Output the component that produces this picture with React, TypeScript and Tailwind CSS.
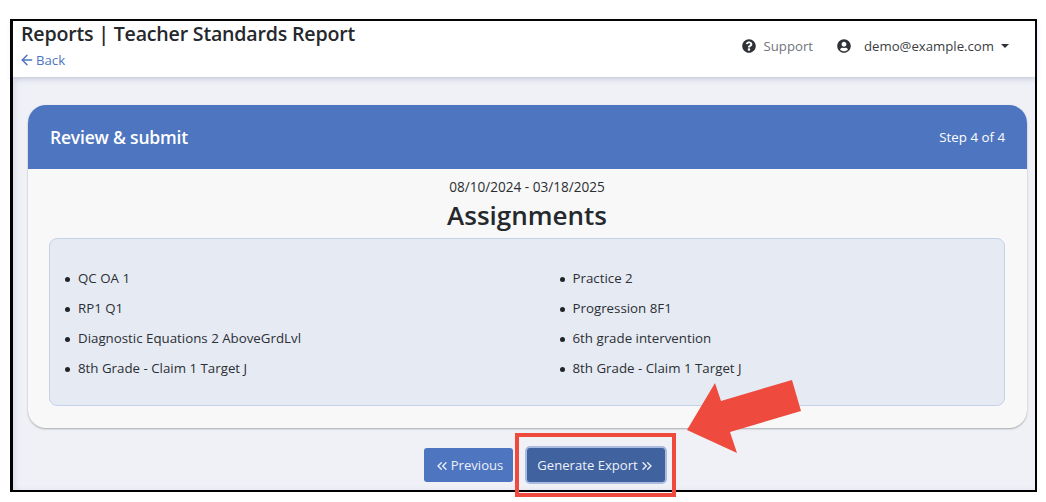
import { ArrowLeft, ChevronsLeft, ChevronsRight } from "lucide-react";
import { FaQuestionCircle, FaUserCircle } from "react-icons/fa";

const leftItems = [
  "QC OA 1",
  "RP1 Q1",
  "Diagnostic Equations 2 AboveGrdLvl",
  "8th Grade - Claim 1 Target J",
];

const rightItems = [
  "Practice 2",
  "Progression 8F1",
  "6th grade intervention",
  "8th Grade - Claim 1 Target J",
];

const AssignmentList = ({ items }: { items: string[] }) => (
  <ul className="flex flex-col gap-[10px]">
    {items.map((item, i) => (
      <li key={i} className="flex h-[20px] items-center text-[13.3px] text-[#2b2f33]">
        <span className="mr-[8px] h-[5px] w-[5px] rounded-full bg-[#212529]" />
        {item}
      </li>
    ))}
  </ul>
);

const App = () => {
  return (
    <div className="relative h-[502px] w-[1046px] overflow-hidden bg-white pl-[10px] pt-[19px] font-['Open_Sans',sans-serif]">
      <div className="flex h-[473px] w-[1027px] flex-col border-2 border-l-[3px] border-black bg-[#f0f1f7]">
        <header className="z-10 flex h-[56px] shrink-0 items-start justify-between bg-white pl-[8px] pr-[26px] shadow-[0_2px_6px_rgba(90,100,150,0.25)]">
          <div>
            <h1 className="text-[19.6px] font-semibold leading-[26px] tracking-[-0.2px] text-[#25282c]">
              Reports | Teacher Standards Report
            </h1>
            <a className="-ml-[2px] mt-[3px] flex items-center gap-[1px] text-[13.2px] leading-[20px] text-[#4e75c0]">
              <ArrowLeft size={16} strokeWidth={2.25} />
              Back
            </a>
          </div>
          <div className="flex items-center pt-[15px] text-[13.2px] leading-[20px]">
            <FaQuestionCircle className="mr-[8px] text-[14px] text-[#2f3236]" />
            <span className="mr-[24px] text-[#70757a]">Support</span>
            <FaUserCircle className="mr-[13px] text-[14px] text-[#2f3236]" />
            <span className="text-[#3a3e42]">demo@example.com</span>
            <span className="ml-[7px] h-0 w-0 border-x-[4px] border-t-[4px] border-x-transparent border-t-[#2f3236]" />
          </div>
        </header>
        <main className="flex flex-1 flex-col pl-[15px] pr-[8px] pt-[28px] shadow-[inset_3px_0_4px_rgba(90,100,150,0.12)]">
          <section className="h-[323px] overflow-hidden rounded-[18px] bg-[#f8f8f8] shadow-[0_1px_2px_rgba(0,0,0,0.3)]">
            <div className="flex h-[64px] items-center justify-between bg-[#4e75c0] px-[22px] pt-[1px] text-white">
              <h2 className="text-[17.5px] font-semibold tracking-[-0.2px]">Review &amp; submit</h2>
              <span className="text-[13.3px]">Step 4 of 4</span>
            </div>
            <div className="flex flex-col items-center pr-[1px] pt-[8px]">
              <p className="text-[13.6px] leading-[19px] text-[#2b2f33]">08/10/2024 - 03/18/2025</p>
              <h3 className="text-[26px] font-semibold leading-[38px] text-[#25282c]">Assignments</h3>
              <div className="mt-[4px] grid h-[168px] w-[956px] grid-cols-2 rounded-[8px] border border-[#c5d2ea] bg-[#e6eaf3] pl-[15px] pt-[30px]">
                <AssignmentList items={leftItems} />
                <div className="pl-[25px]">
                  <AssignmentList items={rightItems} />
                </div>
              </div>
            </div>
          </section>
          <div className="ml-[396px] mt-[20px] flex items-center gap-[14px] text-[13.1px] text-[#edf1f9]">
            <button className="flex h-[34px] w-[89px] items-center justify-center gap-[1px] rounded-[3px] bg-[#4e75c0] pt-[1px]">
              <ChevronsLeft size={16} strokeWidth={2} />
              Previous
            </button>
            <button className="flex h-[34px] w-[138px] items-center justify-center gap-[1px] rounded-[3px] bg-[#40629f] pt-[1px] shadow-[0_0_0_2px_#a9bcdf]">
              Generate Export
              <ChevronsRight size={16} strokeWidth={2} />
            </button>
          </div>
        </main>
      </div>
      {/* callout drawn over the screenshot */}
      <div className="absolute left-[515px] top-[433px] h-[64px] w-[161px] border-[4px] border-[#ee4a3e]" />
      <svg className="absolute left-0 top-0" width="1046" height="502">
        <polygon points="687,430 715,383 721,401 792,380 801,411 730,432 737,453" fill="#ee4a3e" />
      </svg>
    </div>
  );
};

export default App;
